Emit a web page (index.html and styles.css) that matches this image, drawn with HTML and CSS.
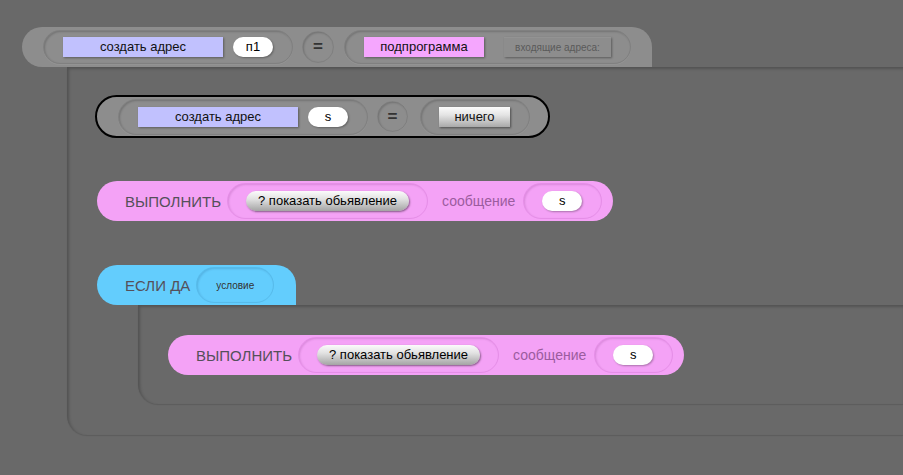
FILE: index.html
```html
<!DOCTYPE html>
<html lang="ru">
<head>
<meta charset="utf-8">
<title>Программа</title>
<link rel="stylesheet" href="styles.css">
</head>
<body>
<div class="program">
  <div class="block gray top-block">
    <div class="slot">
      <div class="name-rect blue">создать адрес</div>
      <div class="value">п1</div>
    </div>
    <div class="eq">=</div>
    <div class="slot slot-right">
      <div class="name-rect pink">подпрограмма</div>
      <div class="flat-btn">входящие адреса:</div>
    </div>
  </div>
  <div class="body-outer">
    <div class="block gray assign-block">
      <div class="slot">
        <div class="name-rect blue">создать адрес</div>
        <div class="value">s</div>
      </div>
      <div class="eq">=</div>
      <div class="slot slot-nothing">
        <div class="nothing-btn">ничего</div>
      </div>
    </div>

    <div class="block pinkblock exec-block first-exec">
      <span class="kw">ВЫПОЛНИТЬ</span>
      <div class="slot slot-pink">
        <div class="grad-btn">? показать обьявление</div>
      </div>
      <span class="param">сообщение</span>
      <div class="slot slot-pink slot-msg">
        <div class="value">s</div>
      </div>
    </div>

    <div class="block blueblock if-block">
      <span class="kw">ЕСЛИ ДА</span>
      <div class="slot slot-cond">условие</div>
    </div>
    <div class="body-inner">
      <div class="block pinkblock exec-block">
        <span class="kw">ВЫПОЛНИТЬ</span>
        <div class="slot slot-pink">
          <div class="grad-btn">? показать обьявление</div>
        </div>
        <span class="param">сообщение</span>
        <div class="slot slot-pink slot-msg">
          <div class="value">s</div>
        </div>
      </div>
    </div>
  </div>
</div>
</body>
</html>
```
FILE: styles.css
```css
html, body {
  margin: 0;
  padding: 0;
}
body {
  background: #696969;
  width: 903px;
  height: 475px;
  overflow: hidden;
  font-family: "Liberation Sans", Arial, sans-serif;
  color: #111;
}
.program {
  display: flex;
  flex-direction: column;
  padding-top: 27px;
}
.block {
  display: flex;
  align-items: center;
  height: 40px;
  box-sizing: border-box;
  align-self: flex-start;
}
.gray { background: #8d8d8d; }
.pinkblock { background: #f4a2f6; }
.blueblock { background: #63cdfd; }

.top-block {
  margin-left: 22px;
  padding: 0 21px 0 21px;
  border-radius: 20px 20px 0 20px;
}
.slot {
  display: flex;
  align-items: center;
  height: 34px;
  box-sizing: border-box;
  padding: 0 19px 0 19px;
  border-radius: 17px;
  border: 1px solid rgba(0,0,0,0.09);
  box-shadow: inset 1px 1px 2px rgba(0,0,0,0.18), 0 1px 0 rgba(255,255,255,0.06);
  gap: 10px;
}
.slot-right {
  margin-left: 10px;
  gap: 20px;
}
.name-rect {
  width: 160px;
  height: 20px;
  line-height: 20px;
  text-align: center;
  font-size: 13px;
  color: #111;
  box-shadow: 1px 1px 2px rgba(0,0,0,0.35);
}
.name-rect.blue { background: #c1c1fe; }
.name-rect.pink { width: 120px; background: #f5a6fe; }
.value {
  width: 40px;
  height: 20px;
  line-height: 20px;
  border-radius: 10px;
  background: #fff;
  text-align: center;
  font-size: 13px;
  color: #000;
  box-shadow: 1px 1px 2px rgba(0,0,0,0.3);
}
.eq {
  width: 32px;
  height: 32px;
  box-sizing: border-box;
  margin-left: 9px;
  border-radius: 50%;
  border: 1px solid rgba(0,0,0,0.09);
  box-shadow: inset 1px 1px 2px rgba(0,0,0,0.18);
  text-align: center;
  line-height: 30px;
  font-size: 17px;
  font-weight: bold;
  color: #333;
}
.flat-btn {
  width: 107px;
  height: 20px;
  line-height: 20px;
  box-sizing: border-box;
  background: #8d8d8d;
  text-align: center;
  font-size: 10px;
  color: #5a5a5a;
  border-top: 1px solid rgba(255,255,255,0.06);
  box-shadow: 1px 1px 2px rgba(0,0,0,0.35);
}

.body-outer {
  margin-left: 67px;
  padding: 28px 0 31px 30px;
  border-bottom-left-radius: 20px;
  box-shadow: inset 2px 2px 3px rgba(0,0,0,0.22), 0 1px 1px rgba(0,0,0,0.12);
  display: flex;
  flex-direction: column;
}
.assign-block {
  margin-left: -2px;
  height: 43px;
  border: 2px solid #000;
  border-radius: 22px;
  padding: 0 18px 0 21px;
}
.assign-block .slot { height: 36px; border-radius: 18px; }
.assign-block .eq { height: 31px; width: 31px; line-height: 29px; }
.slot-nothing {
  margin-left: 12px;
  padding: 0 19px 0 18px;
}
.nothing-btn {
  width: 71px;
  height: 20px;
  line-height: 20px;
  text-align: center;
  font-size: 13px;
  color: #111;
  background: linear-gradient(#fbfbfb, #e4e4e4 40%, #a9a9a9);
  box-shadow: 1px 1px 2px rgba(0,0,0,0.45);
}

.exec-block {
  border-radius: 20px;
  padding: 0 11px 0 28px;
  margin-top: 43px;
}
.kw {
  font-size: 15px;
  color: #55505a;
  white-space: nowrap;
}
.slot-pink {
  height: 36px;
  border-radius: 18px;
  margin-left: 6px;
  padding: 0 18px 0 18px;
  border: 1px solid rgba(120,0,120,0.12);
  box-shadow: inset 1px 1px 2px rgba(80,0,80,0.15);
}
.grad-btn {
  width: 163px;
  height: 20px;
  line-height: 20px;
  border-radius: 10px;
  text-align: center;
  font-size: 13px;
  color: #000;
  background: linear-gradient(#fbfbfb, #e2e2e2 40%, #a4a4a4);
  box-shadow: 1px 1px 2px rgba(0,0,0,0.45);
  white-space: nowrap;
}
.param {
  margin-left: 14px;
  font-size: 14px;
  color: #9b5c9e;
}
.slot-msg {
  margin-left: 8px;
  padding: 0 19px 0 18px;
}

.if-block {
  margin-top: 44px;
  width: 199px;
  padding-left: 28px;
  border-radius: 20px 20px 0 20px;
}
.slot-cond {
  margin-left: 6px;
  width: 78px;
  height: 36px;
  border-radius: 18px;
  padding: 0;
  justify-content: center;
  font-size: 10px;
  color: #333;
  border: 1px solid rgba(0,60,100,0.12);
  box-shadow: inset 1px 1px 2px rgba(0,40,80,0.15);
}

.body-inner {
  margin-left: 41px;
  padding: 30px 0 29px 30px;
  border-bottom-left-radius: 20px;
  box-shadow: inset 2px 2px 3px rgba(0,0,0,0.22), 0 1px 1px rgba(0,0,0,0.12);
  display: flex;
  flex-direction: column;
}
.body-inner .exec-block { margin-top: 0; }
```
